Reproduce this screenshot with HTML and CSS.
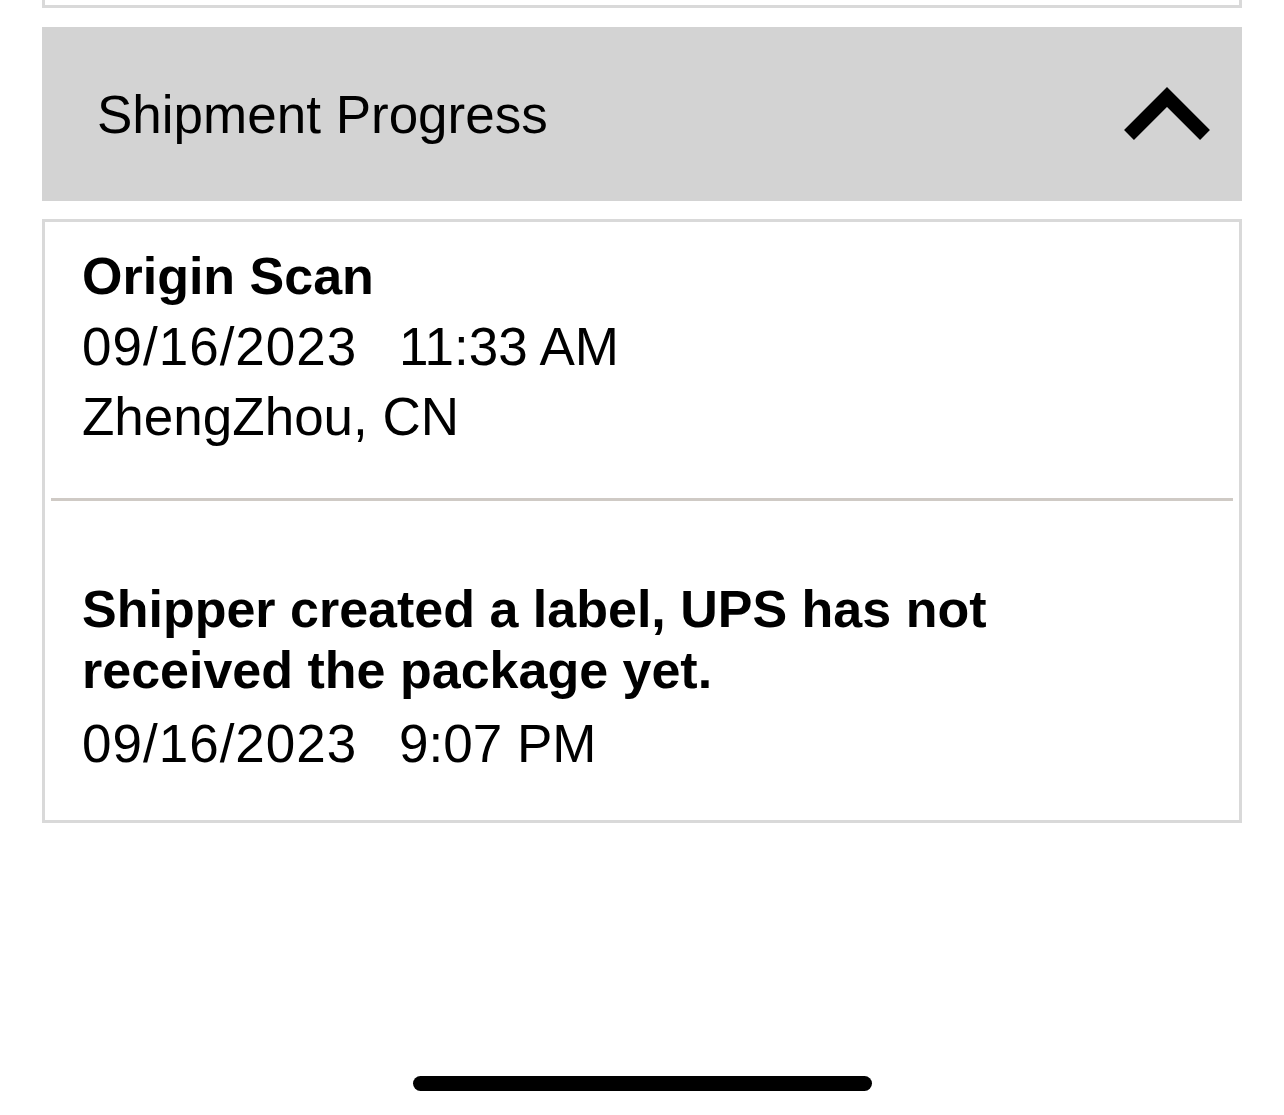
FILE: index.html
```html
<!DOCTYPE html>
<html lang="en">
<head>
<meta charset="utf-8">
<title>Shipment Progress</title>
<link rel="stylesheet" href="styles.css">
</head>
<body>
<div class="screen">
  <div class="prev-card"></div>

  <div class="section-header">
    <span class="section-title">Shipment Progress</span>
    <svg class="chevron" width="96" height="64" viewBox="0 0 96 64" aria-hidden="true">
      <polyline points="10,53 48,15 86,53" fill="none" stroke="#000" stroke-width="14" stroke-linecap="butt" stroke-linejoin="miter"/>
    </svg>
  </div>

  <div class="progress-card">
    <div class="event event-first">
      <div class="event-title">Origin Scan</div>
      <div class="event-line"><span class="event-date">09/16/2023</span><span class="event-time">11:33 AM</span></div>
      <div class="event-line">ZhengZhou, CN</div>
    </div>
    <div class="divider"></div>
    <div class="event event-second">
      <div class="event-title">Shipper created a label, UPS has not received the package yet.</div>
      <div class="event-line"><span class="event-date">09/16/2023</span><span class="event-time">9:07 PM</span></div>
    </div>
  </div>
</div>
<div class="home-indicator"></div>
</body>
</html>
```

FILE: styles.css
```css
html, body {
  margin: 0;
  padding: 0;
  background: #ffffff;
}

body {
  width: 1284px;
  height: 1115px;
  overflow: hidden;
  position: relative;
  font-family: "Liberation Sans", Arial, sans-serif;
  color: #000;
}

.screen {
  margin: 0 42px;
  display: flex;
  flex-direction: column;
}

.prev-card {
  height: 5px;
  border: 3px solid #d9d9d9;
  border-top: none;
  background: #fff;
}

.section-header {
  margin-top: 19px;
  height: 174px;
  background: #d3d3d3;
  display: flex;
  align-items: center;
  justify-content: space-between;
  padding: 0 27px 0 55px;
}

.section-title {
  font-size: 53px;
  line-height: 61px;
  font-weight: 400;
}

.chevron {
  display: block;
}

.progress-card {
  margin-top: 18px;
  border: 3px solid #d9d9d9;
  background: #fff;
  display: flex;
  flex-direction: column;
}

.event {
  display: flex;
  flex-direction: column;
  gap: 9px;
  font-size: 53px;
  line-height: 61px;
  padding-left: 37px;
  padding-right: 120px;
}

.event-first {
  padding-top: 24px;
  padding-bottom: 51px;
}

.event-second {
  gap: 12px;
  padding-top: 78px;
  padding-bottom: 46px;
}

.event-title {
  font-size: 52px;
  font-weight: 700;
}

.event-date {
  display: inline-block;
  width: 317px;
  letter-spacing: 1px;
}

.divider {
  height: 3px;
  margin: 0 6px;
  background: #cfcac5;
}

.home-indicator {
  position: absolute;
  left: 413px;
  top: 1076px;
  width: 459px;
  height: 15px;
  border-radius: 8px;
  background: #000;
}
```
